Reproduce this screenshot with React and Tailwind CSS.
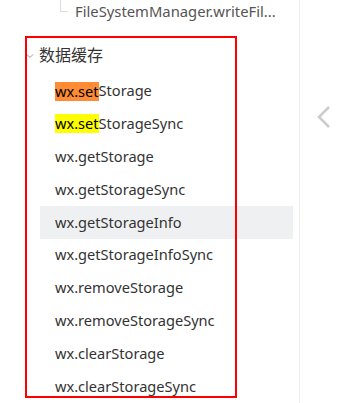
export default function App() {
  const items = [
    "wx.getStorage",
    "wx.getStorageSync",
    "wx.getStorageInfo",
    "wx.getStorageInfoSync",
    "wx.removeStorage",
    "wx.removeStorageSync",
    "wx.clearStorage",
    "wx.clearStorageSync",
  ];
  return (
    <div
      className="relative w-[347px] h-[403px] overflow-hidden bg-white flex"
      style={{ fontFamily: '"Noto Sans", "Noto Sans CJK SC", sans-serif' }}
    >
      <div className="w-[300px] h-full border-r border-[#eeeeee] flex flex-col">
        <div className="relative h-[22px] pl-[75px] text-[14.8px] leading-[22px] text-[#555]">
          <div className="absolute left-[60px] top-0 w-[8px] h-[12px] border-l border-b border-[#ddd]" />
          FileSystemManager.writeFil...
        </div>
        <div className="h-[16px]" />
        <div className="relative h-[34px] flex items-center pl-[39px] text-[16px] text-[#333]">
          <svg className="absolute left-[26px] top-[15px]" width="8" height="6" viewBox="0 0 8 6">
            <path d="M1 1.5 L4 4.5 L7 1.5" fill="none" stroke="#999" strokeWidth="1" />
          </svg>
          数据缓存
        </div>
        <div className="h-[3px]" />
        <div className="h-[33px] flex items-center pl-[55px] text-[14.6px] text-[#333]">
          <span className="bg-[#ff8c34] text-black leading-[19px]">wx.set</span>Storage
        </div>
        <div className="h-[33px] flex items-center pl-[55px] text-[14.6px] text-[#333]">
          <span className="bg-[#ffff00] text-black leading-[19px]">wx.set</span>StorageSync
        </div>
        {items.map((t) => (
          <div
            key={t}
            className={
              "h-[33px] flex items-center pl-[15px] ml-[40px] mr-[6px] text-[14.6px] text-[#333] " +
              (t === "wx.getStorageInfo" ? "bg-[#eff0f2]" : "")
            }
          >
            {t}
          </div>
        ))}
      </div>
      <div className="flex-1 flex justify-center pt-[105px]">
        <svg width="16" height="24" viewBox="0 0 16 24">
          <path d="M13 2 L3 12 L13 22" fill="none" stroke="#cccccc" strokeWidth="2.5" />
        </svg>
      </div>
      <div className="absolute left-[25px] top-[36px] w-[212px] h-[362px] border-2 border-[#ff0000]" />
    </div>
  );
}
